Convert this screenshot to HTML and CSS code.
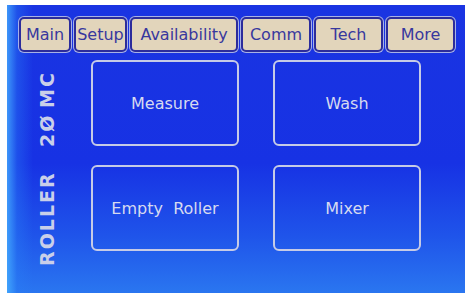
FILE: index.html
```html
<!DOCTYPE html>
<html lang="en">
<head>
    <meta charset="UTF-8">
    <meta name="viewport" content="width=device-width, initial-scale=1.0">
    <title>Roller 20 MC</title>
    <link rel="stylesheet" href="styles.css">
</head>
<body>
    <div class="screen">
        <nav class="tabs">
            <div class="tab tab-main">Main</div>
            <div class="tab tab-setup">Setup</div>
            <div class="tab tab-avail">Availability</div>
            <div class="tab tab-comm">Comm</div>
            <div class="tab tab-tech">Tech</div>
            <div class="tab tab-more">More</div>
        </nav>
        <div class="main">
            <div class="side">
                <div class="side-label"><span>ROLLER</span><span class="num">2Ø</span><span class="model">MC</span></div>
            </div>
            <div class="buttons">
                <div class="btn">Measure</div>
                <div class="btn">Wash</div>
                <div class="btn">Empty&nbsp;&nbsp;Roller</div>
                <div class="btn">Mixer</div>
            </div>
        </div>
    </div>
</body>
</html>
```

FILE: styles.css
```css
body {
    margin: 0;
    padding: 0;
    background-color: #fff;
    font-family: "DejaVu Sans", sans-serif;
}

.screen {
    margin: 5px 0 0 7px;
    width: 458px;
    height: 288px;
    box-sizing: border-box;
    padding: 12px 0 0 12px;
    display: flex;
    flex-direction: column;
    background:
        linear-gradient(90deg, rgba(70, 175, 255, 0.8) 0px, rgba(40, 125, 245, 0.4) 10px, rgba(20, 60, 230, 0) 26px),
        linear-gradient(180deg, #1a34e2 0%, #1732e4 55%, #1f54ea 80%, #2a76f0 100%);
}

.tabs {
    display: flex;
    gap: 3px;
    height: 35px;
}

.tab {
    box-sizing: border-box;
    height: 35px;
    display: flex;
    align-items: center;
    justify-content: center;
    background-color: #e2d5bb;
    border: 2px solid #2c2c9c;
    border-radius: 5px;
    box-shadow: 0 0 0 1px #a8b2e6;
    color: #38389e;
    font-size: 16px;
}

.tab-main { width: 52px; }
.tab-setup { width: 53px; }
.tab-avail { width: 108px; }
.tab-comm { width: 70px; }
.tab-tech { width: 69px; }
.tab-more { width: 69px; }

.main {
    display: flex;
    margin-top: 8px;
}

.side {
    width: 72px;
    padding-left: 18px;
    box-sizing: border-box;
}

.side-label {
    writing-mode: vertical-rl;
    transform: rotate(180deg);
    height: 200px;
    margin-top: 6px;
    line-height: 20px;
    color: #c9cfe9;
    font-family: "DejaVu Sans", sans-serif;
    font-weight: bold;
    font-size: 19px;
    letter-spacing: 2px;
    white-space: nowrap;
}

.side-label .num {
    margin-inline-start: 24px;
}

.side-label .model {
    margin-inline-start: 6px;
}

.buttons {
    display: grid;
    grid-template-columns: 148px 148px;
    grid-template-rows: 86px 86px;
    column-gap: 34px;
    row-gap: 19px;
}

.btn {
    box-sizing: border-box;
    border: 2.5px solid #c6cbe6;
    border-radius: 6px;
    display: flex;
    align-items: center;
    justify-content: center;
    color: #d6daf0;
    font-size: 16px;
}
```
